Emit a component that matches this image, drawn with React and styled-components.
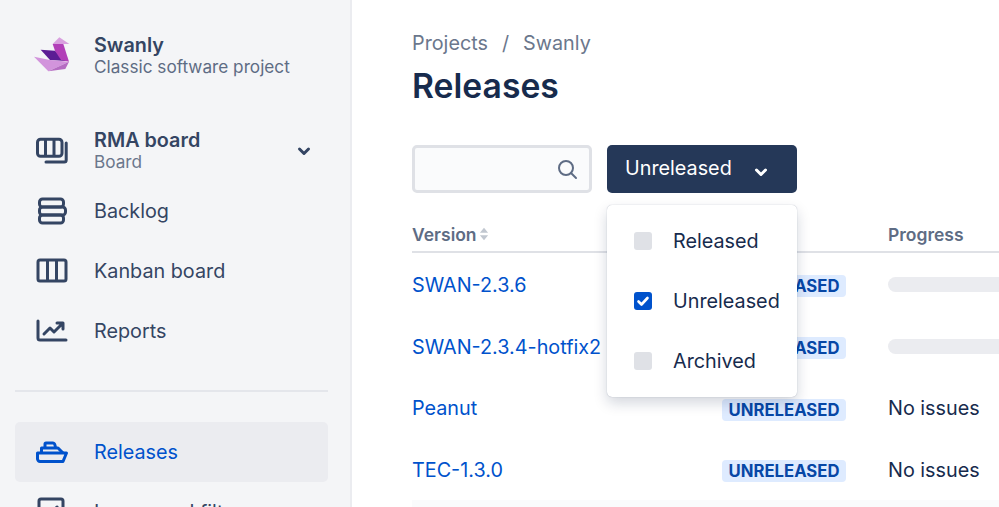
import React from "react";
import styled, { createGlobalStyle } from "styled-components";

const GlobalStyle = createGlobalStyle`
  html, body {
    margin: 0;
    height: 100%;
    overflow: hidden;
    background: #fff;
  }
  body {
    font-family: Inter, "Noto Sans", sans-serif;
    color: #172b4d;
  }
  * {
    box-sizing: border-box;
  }
`;

const Page = styled.div`
  display: flex;
  width: 999px;
  height: 507px;
  overflow: hidden;
`;

const Sidebar = styled.aside`
  flex: 0 0 352px;
  height: 507px;
  padding: 30px 22px 0 15px;
  background: #f4f5f7;
  border-right: 2px solid #ebecf0;
  overflow: hidden;
`;

const Project = styled.div`
  display: flex;
  align-items: center;
  height: 50px;
  padding-left: 19px;
  margin-bottom: 48px;
`;

const LogoBox = styled.div`
  flex: 0 0 60px;
  display: flex;
`;

const ProjectName = styled.div`
  font-size: 19.8px;
  line-height: 24px;
  font-weight: 600;
  color: #344563;
`;

const ProjectType = styled.div`
  font-size: 17.2px;
  line-height: 20px;
  color: #5e6c84;
`;

const BoardRow = styled.div`
  display: flex;
  align-items: center;
  height: 44px;
  padding: 0 16px 0 21px;
  margin-bottom: 9px;
  color: #344563;
`;

const BoardText = styled.div`
  flex: 1;
`;

const BoardName = styled.div`
  font-size: 19.8px;
  line-height: 24px;
  font-weight: 600;
`;

const BoardType = styled.div`
  font-size: 17.2px;
  line-height: 20px;
  color: #6b778c;
`;

const BoardChevron = styled.span`
  display: flex;
  margin-top: 2px;
`;

const NavItem = styled.div`
  display: flex;
  align-items: center;
  height: 60px;
  padding-left: 21px;
  border-radius: 5px;
  font-size: 19.8px;
  color: ${(p) => (p.$active ? "#0052cc" : "#344563")};
  background: ${(p) => (p.$active ? "#ebecf0" : "transparent")};
`;

const NavIcon = styled.span`
  flex: 0 0 58px;
  display: flex;
  color: inherit;
`;

const Divider = styled.hr`
  height: 2px;
  margin: 29px 0 30px;
  border: 0;
  background: #e4e6eb;
`;

const Main = styled.main`
  flex: 1;
  min-width: 0;
  padding: 30px 0 0 60px;
`;

const Crumbs = styled.div`
  display: flex;
  gap: 14px;
  font-size: 19.8px;
  line-height: 26px;
  color: #6b778c;
`;

const Title = styled.h1`
  margin: 8px 0 0;
  font-size: 33.7px;
  line-height: 44px;
  font-weight: 600;
  color: #172b4d;
`;

const Toolbar = styled.div`
  position: relative;
  display: flex;
  gap: 15px;
  margin-top: 37px;
`;

const SearchBox = styled.div`
  display: flex;
  align-items: center;
  justify-content: flex-end;
  width: 180px;
  height: 48px;
  padding-right: 11px;
  background: #fafbfc;
  border: 3px solid #dfe1e6;
  border-radius: 5px;
`;

const FilterButton = styled.button`
  display: flex;
  align-items: center;
  width: 190px;
  height: 48px;
  padding: 0 0 2px 18px;
  background: #253858;
  border: 0;
  border-radius: 5px;
  font: inherit;
  font-size: 19.8px;
  color: #fff;
`;

const ButtonChevron = styled.span`
  display: flex;
  margin-left: 21px;
  padding-top: 7px;
`;

const Menu = styled.div`
  position: absolute;
  z-index: 2;
  top: 60px;
  left: 195px;
  width: 190px;
  height: 192px;
  padding: 6px 0;
  background: #fff;
  border-radius: 5px;
  box-shadow: 0 0 1px rgba(9, 30, 66, 0.35), 0 6px 14px rgba(9, 30, 66, 0.18);
`;

const MenuItem = styled.div`
  display: flex;
  align-items: center;
  height: 60px;
  padding-left: 27px;
  font-size: 19.8px;
  color: #172b4d;
`;

const Check = styled.span`
  flex: 0 0 18px;
  display: flex;
  align-items: center;
  justify-content: center;
  width: 18px;
  height: 18px;
  margin-right: 21px;
  border-radius: 3px;
  background: ${(p) => (p.$checked ? "#0052cc" : "#dfe1e6")};
`;

const Table = styled.div`
  margin-top: 30px;
`;

const HeadRow = styled.div`
  display: grid;
  grid-template-columns: 310px 166px 1fr;
  align-items: center;
  height: 30px;
  padding-bottom: 6px;
  border-bottom: 2px solid #dfe1e6;
  font-size: 17.5px;
  font-weight: 600;
  color: #5e6c84;
`;

const HeadCell = styled.div`
  display: flex;
  align-items: center;
  gap: 2px;
`;

const Row = styled.div`
  display: grid;
  grid-template-columns: 310px 166px 1fr;
  align-items: center;
  height: 61.7px;
  padding-top: 2px;
  font-size: 19.8px;
`;

const VersionLink = styled.a`
  color: #0052cc;
`;

const LozengeCell = styled.div`
  display: flex;
  margin-top: 3px;
`;

const Lozenge = styled.span`
  width: 124px;
  height: 22px;
  border-radius: 4px;
  background: #deebff;
  font-size: 16.7px;
  line-height: 22px;
  font-weight: 700;
  text-align: center;
  color: #0747a6;
`;

const ProgressBar = styled.div`
  height: 15px;
  margin-right: -20px;
  border-radius: 8px 0 0 8px;
  background: #ebecf0;
`;

const BottomStrip = styled.div`
  height: 10px;
  background: #fafbfc;
`;

const Swan = () => (
  <svg width="37" height="37" viewBox="102 109 111 111">
    <path d="M122 147 L165 150 L200 181 L150 178 Z" fill="#5b1d94" />
    <path d="M158 130 L178 110 L208 130 Z" fill="#d9a0df" />
    <path d="M158 130 L190 130 L207 183 L183 178 L165 150 Z" fill="#b23fb8" />
    <path d="M102 168 L150 178 L207 183 L145 212 Z" fill="#d294dc" />
    <path d="M145 212 L207 183 L196 205 Z" fill="#b56cc2" />
  </svg>
);

const BoardIcon = () => (
  <svg width="34" height="30" viewBox="0 0 34 30" fill="none" stroke="currentColor" strokeWidth="3">
    <rect x="1.5" y="4.2" width="24.5" height="17" rx="3" />
    <path d="M9.5 4.2v17M18 4.2v17" />
    <path d="M30.2 8v17a2 2 0 0 1-2 2H10" strokeLinecap="round" />
  </svg>
);

const BacklogIcon = () => (
  <svg width="32" height="28" viewBox="0 0 32 28" fill="none" stroke="currentColor" strokeWidth="3">
    <rect x="3.5" y="2" width="24" height="8" rx="3" />
    <rect x="3.5" y="10" width="26" height="8" rx="3" />
    <rect x="3.5" y="18" width="24" height="8" rx="3" />
  </svg>
);

const KanbanIcon = () => (
  <svg width="32" height="26" viewBox="0 0 32 26" fill="none" stroke="currentColor" strokeWidth="3">
    <rect x="2" y="2" width="28" height="21" rx="2" />
    <path d="M11.5 2v21M20.5 2v21" />
  </svg>
);

const ReportsIcon = () => (
  <svg width="32" height="24" viewBox="0 0 32 24" fill="none" stroke="currentColor" strokeWidth="3" strokeLinecap="round" strokeLinejoin="round">
    <path d="M2 2v17a2 2 0 0 0 2 2h26" />
    <path d="M8 15l6-6 4 4 8-8M21 4h6v6" />
  </svg>
);

const ShipIcon = () => (
  <svg width="32" height="22" viewBox="0 0 32 22" fill="none" stroke="currentColor" strokeWidth="3" strokeLinejoin="round">
    <path d="M1.5 12H30.5L27 20.5H4Q2 20.5 1.5 18Z" />
    <path d="M5.5 12V7H22L27 12" />
    <path d="M9 7V3Q9 2 10 2H17Q19 2 19.5 7" />
  </svg>
);

const IssuesIcon = () => (
  <svg width="30" height="30" viewBox="0 0 30 30" fill="none" stroke="currentColor" strokeWidth="3" strokeLinecap="round" strokeLinejoin="round">
    <rect x="3" y="2" width="24" height="25" rx="2" />
    <path d="M10 14l4 4 7-8" />
  </svg>
);

const Chevron = ({ size = 16 }) => (
  <svg width={size} height={size} viewBox="0 0 16 16" fill="none" stroke="currentColor" strokeWidth="3" strokeLinecap="round" strokeLinejoin="round">
    <path d="M3.5 6l4.5 4.5L12.5 6" />
  </svg>
);

const SearchIcon = () => (
  <svg width="22" height="22" viewBox="0 0 22 22" fill="none" stroke="#5e6c84" strokeWidth="2" strokeLinecap="round">
    <circle cx="10" cy="10" r="7" />
    <path d="M15 15l5 5" />
  </svg>
);

const SortIcon = () => (
  <svg width="10" height="14" viewBox="0 0 11 14" fill="#c1c7d0">
    <path d="M5.5 0L10 5.5H1zM5.5 14L1 8.5h9z" />
  </svg>
);

const CheckMark = () => (
  <svg width="14" height="14" viewBox="0 0 14 14" fill="none" stroke="#fff" strokeWidth="2.6" strokeLinecap="round" strokeLinejoin="round">
    <path d="M2.5 7.5l3 3 6-6.5" />
  </svg>
);

const versions = [
  { name: "SWAN-2.3.6", progress: true },
  { name: "SWAN-2.3.4-hotfix2", progress: true },
  { name: "Peanut", progress: false },
  { name: "TEC-1.3.0", progress: false },
];

const navTop = [
  { label: "Backlog", icon: <BacklogIcon /> },
  { label: "Kanban board", icon: <KanbanIcon /> },
  { label: "Reports", icon: <ReportsIcon /> },
];

const navBottom = [
  { label: "Releases", icon: <ShipIcon />, active: true },
  { label: "Issues and filters", icon: <IssuesIcon /> },
];

const App = () => (
  <Page>
    <GlobalStyle />
    <Sidebar>
      <Project>
        <LogoBox>
          <Swan />
        </LogoBox>
        <div>
          <ProjectName>Swanly</ProjectName>
          <ProjectType>Classic software project</ProjectType>
        </div>
      </Project>
      <BoardRow>
        <NavIcon>
          <BoardIcon />
        </NavIcon>
        <BoardText>
          <BoardName>RMA board</BoardName>
          <BoardType>Board</BoardType>
        </BoardText>
        <BoardChevron>
          <Chevron />
        </BoardChevron>
      </BoardRow>
      {navTop.map((item) => (
        <NavItem key={item.label}>
          <NavIcon>{item.icon}</NavIcon>
          {item.label}
        </NavItem>
      ))}
      <Divider />
      {navBottom.map((item) => (
        <NavItem key={item.label} $active={item.active}>
          <NavIcon>{item.icon}</NavIcon>
          {item.label}
        </NavItem>
      ))}
    </Sidebar>
    <Main>
      <Crumbs>
        <span>Projects</span>
        <span>/</span>
        <span>Swanly</span>
      </Crumbs>
      <Title>Releases</Title>
      <Toolbar>
        <SearchBox>
          <SearchIcon />
        </SearchBox>
        <FilterButton>
          Unreleased
          <ButtonChevron>
            <Chevron />
          </ButtonChevron>
        </FilterButton>
        <Menu>
          <MenuItem>
            <Check />
            Released
          </MenuItem>
          <MenuItem>
            <Check $checked>
              <CheckMark />
            </Check>
            Unreleased
          </MenuItem>
          <MenuItem>
            <Check />
            Archived
          </MenuItem>
        </Menu>
      </Toolbar>
      <Table>
        <HeadRow>
          <HeadCell>
            Version
            <SortIcon />
          </HeadCell>
          <HeadCell>Status</HeadCell>
          <HeadCell>Progress</HeadCell>
        </HeadRow>
        {versions.map((v) => (
          <Row key={v.name}>
            <VersionLink>{v.name}</VersionLink>
            <LozengeCell>
              <Lozenge>UNRELEASED</Lozenge>
            </LozengeCell>
            {v.progress ? <ProgressBar /> : <div>No issues</div>}
          </Row>
        ))}
        <BottomStrip />
      </Table>
    </Main>
  </Page>
);

export default App;
